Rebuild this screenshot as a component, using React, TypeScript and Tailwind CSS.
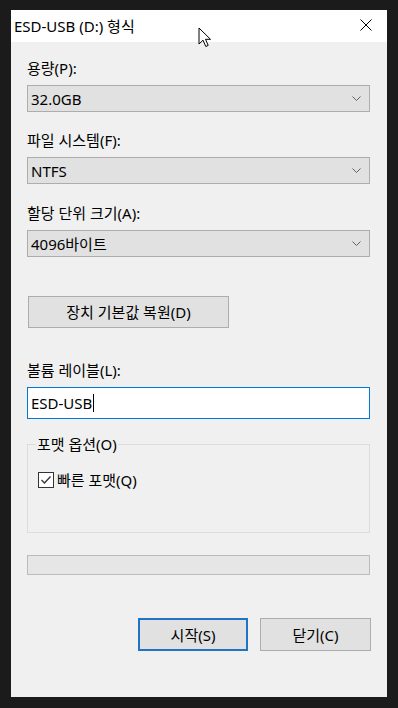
import React from "react";

const FONT = '"Segoe UI", "Noto Sans", "Noto Sans CJK KR", sans-serif';

function Chevron() {
  return (
    <svg width="9" height="5" viewBox="0 0 9 5" className="block">
      <path d="M0.5 0.5 L4.5 4.5 L8.5 0.5" fill="none" stroke="#606060" strokeWidth="1" />
    </svg>
  );
}

function Combo({ value }: { value: string }) {
  return (
    <div className="flex h-[27px] w-[343px] items-center justify-between border border-[#adadad] bg-[#e1e1e1] pl-[3px] pr-[8px] text-[15px] leading-[20px] text-black">
      <span>{value}</span>
      <Chevron />
    </div>
  );
}

function Label({ text, mt }: { text: string; mt: string }) {
  return <div className={`${mt} h-[20px] text-[15px] leading-[20px] text-black`}>{text}</div>;
}

export default function App() {
  return (
    <div className="relative h-[708px] w-[398px] bg-[#1b1b1b] pl-[11px] pt-[10px]" style={{ fontFamily: FONT }}>
      <div className="flex h-[687px] w-[376px] flex-col bg-[#f0f0f0]">
        <div className="flex h-[32px] items-center justify-between bg-white pl-[3px] pr-[15px]">
          <span className="text-[15px] leading-[20px] text-black">ESD-USB (D:) 형식</span>
          <svg width="12" height="12" viewBox="0 0 12 12" className="mb-[2px]">
            <path d="M0.5 0.5 L11.5 11.5 M11.5 0.5 L0.5 11.5" stroke="#000" strokeWidth="1" />
          </svg>
        </div>
        <div className="flex flex-col pl-[16px]">
          <div className="mt-[16px] h-[20px] text-[15px] leading-[20px] text-black">용량(P):</div>
          <div className="mt-[7px]">
            <Combo value="32.0GB" />
          </div>
          <div className="mt-[18px] h-[20px] text-[15px] leading-[20px] text-black">파일 시스템(F):</div>
          <div className="mt-[7px]">
            <Combo value="NTFS" />
          </div>
          <div className="mt-[19px] h-[20px] text-[15px] leading-[20px] text-black">할당 단위 크기(A):</div>
          <div className="mt-[7px]">
            <Combo value="4096바이트" />
          </div>
          <div className="ml-[1px] mt-[39px] flex h-[32px] w-[201px] items-center justify-center border border-[#adadad] bg-[#e1e1e1] text-[15px] leading-[20px] text-black">
            장치 기본값 복원(D)
          </div>
          <div className="mt-[32px] h-[20px] text-[15px] leading-[20px] text-black">볼륨 레이블(L):</div>
          <div className="mt-[7px] flex h-[32px] w-[343px] items-center border border-[#0078d7] bg-white pl-[3px] text-[15px] leading-[20px] text-black">
            <span>ESD-USB</span>
            <span className="ml-[1px] h-[18px] w-[1px] bg-black" />
          </div>
          <fieldset className="mt-[15px] h-[99px] w-[343px] border border-[#dcdcdc] pl-[6px]">
            <legend className="ml-[2px] px-[1px] text-[15px] leading-[20px] text-black">포맷 옵션(O)</legend>
            <div className="mt-[16px] flex items-center">
              <div className="ml-[4px] flex h-[16px] w-[16px] items-center justify-center border border-[#333333] bg-white">
                <svg width="12" height="10" viewBox="0 0 12 10">
                  <path d="M1.5 5 L4.5 8 L10.5 1.5" fill="none" stroke="#333" strokeWidth="1.3" />
                </svg>
              </div>
              <span className="ml-[3px] text-[15px] leading-[20px] text-black">빠른 포맷(Q)</span>
            </div>
          </fieldset>
          <div className="mt-[22px] h-[20px] w-[343px] border border-[#bcbcbc] bg-[#e6e6e6]" />
          <div className="mt-[43px] flex gap-[12px] pl-[111px]">
            <div className="flex h-[33px] w-[110px] items-center justify-center border-2 border-[#1f74c4] bg-[#e1e1e1] text-[15px] leading-[20px] text-black">
              시작(S)
            </div>
            <div className="flex h-[33px] w-[111px] items-center justify-center border border-[#adadad] bg-[#e1e1e1] text-[15px] leading-[20px] text-black">
              닫기(C)
            </div>
          </div>
        </div>
      </div>
      <svg className="absolute left-[198px] top-[27px]" width="14" height="21" viewBox="0 0 14 21">
        <path d="M1 1 L1 17 L5 13.2 L7.8 19.5 L10.2 18.4 L7.5 12.3 L12.5 12.3 Z" fill="#fff" stroke="#000" strokeWidth="1" strokeLinejoin="miter" />
      </svg>
    </div>
  );
}
